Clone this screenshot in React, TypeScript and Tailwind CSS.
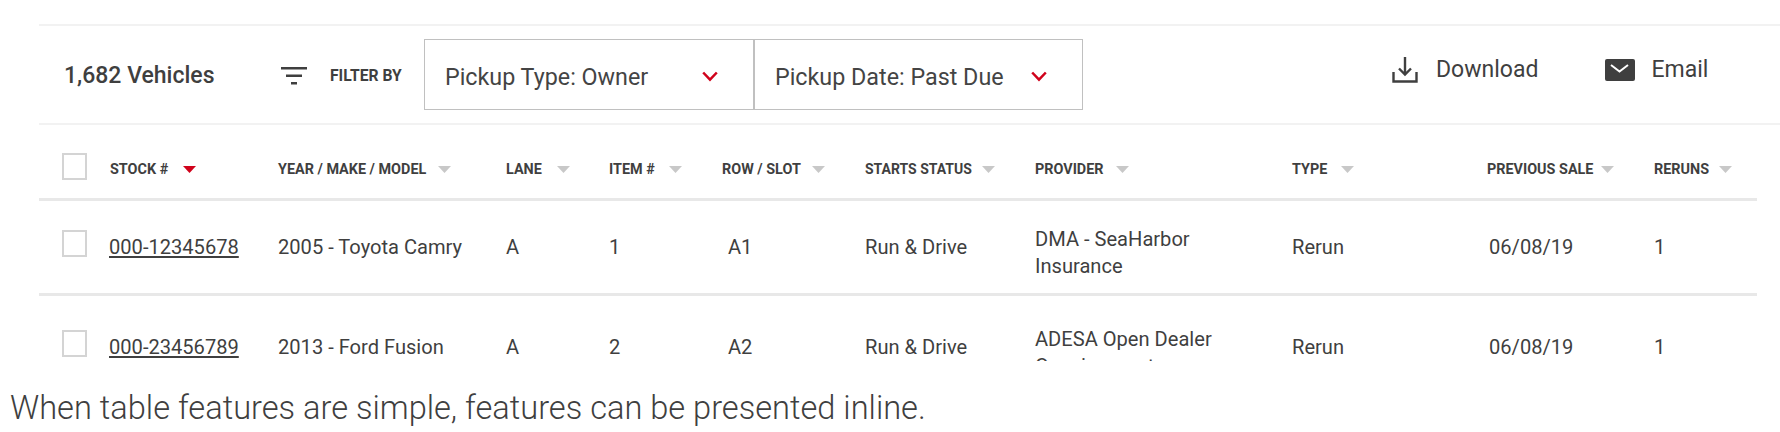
const columns = [
  { label: 'STOCK #', cell: 'gap-[15px] pt-[7px]', active: true },
  { label: 'YEAR / MAKE / MODEL', cell: 'gap-[12px] pt-[7px]' },
  { label: 'LANE', cell: 'gap-[15px] pt-[7px]' },
  { label: 'ITEM #', cell: 'gap-[14px] pt-[7px]' },
  { label: 'ROW / SLOT', cell: 'gap-[11px] pt-[7px]' },
  { label: 'STARTS STATUS', cell: 'gap-[10px] pt-[5px] text-[14px]' },
  { label: 'PROVIDER', cell: 'gap-[12px] pt-[7px]' },
  { label: 'TYPE', cell: 'gap-[14px] pt-[7px]' },
  { label: 'PREVIOUS SALE', cell: 'gap-[8px] pt-[7px]' },
  { label: 'RERUNS', cell: 'gap-[10px] pt-[7px]' },
]

const rows = [
  { stock: '000-12345678', car: '2005 - Toyota Camry', item: '1', slot: 'A1', provider: 'DMA - SeaHarbor Insurance', height: 'h-[95px] border-b-[3px] border-[#e8e8e8]' },
  { stock: '000-23456789', car: '2013 - Ford Fusion', item: '2', slot: 'A2', provider: 'ADESA Open Dealer Consignment', height: 'h-[102px]' },
]

const gridCols = 'grid grid-cols-[71px_168px_228px_103px_113px_143px_170px_257px_195px_167px_102px]'

function Checkbox() {
  return <div className="h-[27px] w-[25px] border-2 border-[#d4d4d4] bg-white" />
}

function SortArrow({ active }: { active?: boolean }) {
  return (
    <svg className="h-[7px] w-[13px] shrink-0" viewBox="0 0 13 7">
      <polygon points="0,0 13,0 6.5,7" fill={active ? '#d0021b' : '#c8c8c8'} />
    </svg>
  )
}

function Chevron() {
  return (
    <svg className="mb-[2px] h-[11px] w-[16px] shrink-0" viewBox="0 0 16 11" fill="none">
      <path d="M1.2 1.5l6.8 7.2 6.8-7.2" stroke="#d0021b" strokeWidth="2.5" />
    </svg>
  )
}

function FilterSelect({ label, width, gap }: { label: string; width: string; gap: string }) {
  return (
    <div className={`flex h-[71px] items-center border border-[#c0c0c0] pl-[20px] pt-[6px] text-[23.3px] text-[#444] ${width} ${gap}`}>
      <span className="whitespace-nowrap">{label}</span>
      <Chevron />
    </div>
  )
}

export default function App() {
  return (
    <div className="h-[432px] w-[1780px] overflow-hidden bg-white font-['Roboto',sans-serif] text-[#3f3f3f]">
      <div className="pl-[39px] pt-[24px]">
        {/* toolbar */}
        <div className="flex h-[101px] items-center border-y-2 border-[#f2f2f2]">
          <div className="w-[242px] pl-[25px] pt-[3px] text-[23px] font-medium">1,682 Vehicles</div>
          <svg className="mt-[2px] h-[18px] w-[26px]" viewBox="0 0 26 18" fill="#3f3f3f">
            <rect x="0" y="0" width="26" height="2.5" />
            <rect x="5" y="7.5" width="16" height="2.5" />
            <rect x="10" y="15" width="6" height="2.5" />
          </svg>
          <div className="ml-[23px] w-[94px] pt-[3px] text-[15.7px] font-bold">FILTER BY</div>
          <FilterSelect label="Pickup Type: Owner" width="w-[330px]" gap="gap-[54px]" />
          <FilterSelect label="Pickup Date: Past Due" width="w-[329px]" gap="gap-[27px]" />
          <div className="ml-[309px] flex items-center pb-[9px] text-[23px]">
            <svg className="h-[26px] w-[26px]" viewBox="0 0 26 26" fill="none" stroke="#3f3f3f" strokeWidth="2.4">
              <path d="M13 0v17M7 11.5l6 6 6-6" />
              <path d="M1.5 15v9.5h23V15" />
            </svg>
            <span className="ml-[18px]">Download</span>
            <svg className="ml-[67px] h-[22px] w-[30px]" viewBox="0 0 30 22">
              <rect width="30" height="22" rx="2" fill="#3f3f3f" />
              <path d="M6 6l8.5 6.5L23 6" fill="none" stroke="#fff" strokeWidth="2" />
            </svg>
            <span className="ml-[16px]">Email</span>
          </div>
        </div>

        {/* table */}
        <div className="w-[1718px]">
          <div className={`${gridCols} h-[76px] items-center border-b-[3px] border-[#e8e8e8] pt-[10px] text-[14.4px] font-bold`}>
            <div className="pl-[23px]">
              <Checkbox />
            </div>
            {columns.map((col) => (
              <div key={col.label} className={`flex items-center whitespace-nowrap ${col.cell}`}>
                <span>{col.label}</span>
                <SortArrow active={col.active} />
              </div>
            ))}
          </div>
          <div className="h-[160px] overflow-hidden text-[20.1px] leading-[27px]">
            {rows.map((row) => (
              <div key={row.stock} className={`${gridCols} items-center ${row.height}`}>
                <div className="mb-[7px] pl-[23px]">
                  <Checkbox />
                </div>
                <div className="-ml-px underline">{row.stock}</div>
                <div>{row.car}</div>
                <div>A</div>
                <div>{row.item}</div>
                <div className="pl-[6px]">{row.slot}</div>
                <div>Run &amp; Drive</div>
                <div className="w-[200px] pt-[12px]">{row.provider}</div>
                <div>Rerun</div>
                <div className="pl-[2px]">06/08/19</div>
                <div>1</div>
              </div>
            ))}
          </div>
        </div>
      </div>
      <p className="mt-[29px] pl-[10px] text-[32.6px] font-light leading-[36px] text-[#3f3f3f]">
        When table features are simple, features can be presented inline.
      </p>
    </div>
  )
}
